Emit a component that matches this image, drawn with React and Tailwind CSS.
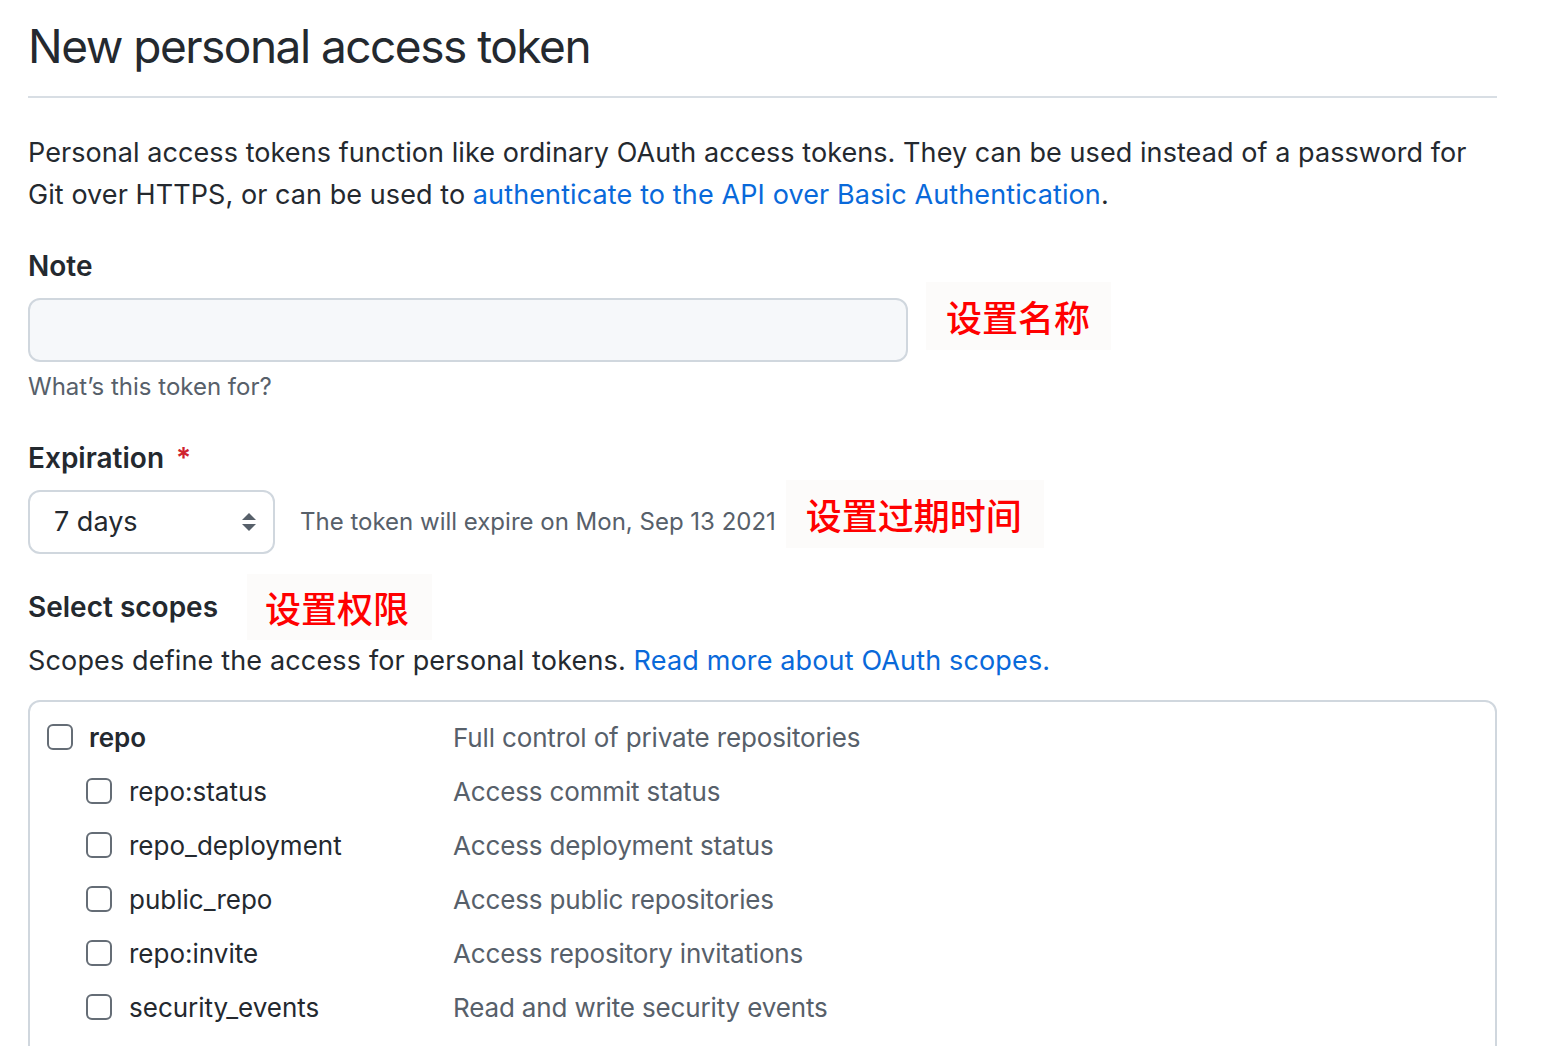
import React from "react";

const font = { fontFamily: "Inter, 'Noto Sans', 'Liberation Sans', sans-serif" };

function Box() {
  return <span className="inline-block w-[26px] h-[26px] rounded-[6px] border-2 border-[#656d76] bg-white shrink-0" />;
}

function Note({ children, className = "" }) {
  return (
    <div
      className={"bg-[#fcfbfa] flex items-center text-[#ff0000] text-[36px] leading-[44px] font-medium " + className}
      style={{ fontFamily: "'Noto Sans CJK SC', sans-serif" }}
    >
      {children}
    </div>
  );
}

const subs = [
  ["repo:status", "Access commit status"],
  ["repo_deployment", "Access deployment status"],
  ["public_repo", "Access public repositories"],
  ["repo:invite", "Access repository invitations"],
  ["security_events", "Read and write security events"],
];

export default function App() {
  return (
    <div className="bg-white min-h-[1046px] w-[1566px] overflow-hidden text-[#24292f]" style={font}>
      <div className="pl-[28px] w-[1497px]">
        <div className="pt-[16px] pb-[20px] border-b-2 border-[#d8dee4]">
          <h1 className="text-[46px] leading-[60px] font-normal tracking-[-1.5px]">New personal access token</h1>
        </div>

        <p className="mt-[34px] text-[27px] leading-[42px] whitespace-nowrap tracking-[0.07px]">
          Personal access tokens function like ordinary OAuth access tokens. They can be used instead of a password for
          <br />
          Git over HTTPS, or can be used to{" "}
          <span className="text-[#0969da] tracking-[0.12px]">authenticate to the API over Basic Authentication</span>.
        </p>

        <div className="mt-[29px] text-[28px] leading-[42px] font-semibold">Note</div>
        <div className="mt-[11px] flex items-start">
          <div className="w-[880px] h-[64px] rounded-[12px] border-2 border-[#d0d7de] bg-[#f6f8fa]" />
          <Note className="ml-[18px] -mt-[16px] h-[68px] w-[185px] pl-[20px]">设置名称</Note>
        </div>
        <div className="mt-[7px] text-[24px] leading-[36px] text-[#57606a]">What’s this token for?</div>

        <div className="mt-[32px] text-[28px] leading-[42px] font-semibold flex items-center">
          Expiration <span className="ml-[12px] text-[#cf222e]">*</span>
        </div>
        <div className="mt-[11px] flex items-start">
          <div className="w-[247px] h-[64px] rounded-[12px] border-2 border-[#d0d7de] bg-white flex items-center pl-[24px] pr-[16px] justify-between">
            <span className="text-[27px]">7 days</span>
            <svg width="16" height="22" viewBox="0 0 16 22">
              <path d="M8 2 L15 9 L1 9 Z" fill="#57606a" />
              <path d="M1 13 L15 13 L8 20 Z" fill="#57606a" />
            </svg>
          </div>
          <div className="ml-[25px] h-[64px] flex items-center text-[24px] text-[#57606a] whitespace-nowrap">
            The token will expire on Mon, Sep 13 2021
          </div>
          <Note className="ml-[10px] -mt-[10px] h-[68px] w-[258px] pl-[20px]">设置过期时间</Note>
        </div>

        <div className="mt-[20px] flex items-center">
          <div className="text-[28px] leading-[42px] font-semibold">Select scopes</div>
          <Note className="ml-[29px] h-[66px] w-[185px] pl-[18px]">设置权限</Note>
        </div>
        <p className="text-[27px] leading-[42px] tracking-[0.15px]">
          Scopes define the access for personal tokens.{" "}
          <span className="text-[#0969da]">Read more about OAuth scopes.</span>
        </p>

        <div className="mt-[18px] border-2 border-[#d0d7de] rounded-[12px] h-[400px] pt-[8px]">
          <div className="flex items-center h-[54px] pl-[17px]">
            <div className="w-[406px] flex items-center">
              <Box />
              <span className="ml-[16px] text-[26px] font-semibold">repo</span>
            </div>
            <span className="text-[26px] text-[#57606a] tracking-[-0.15px]">Full control of private repositories</span>
          </div>
          {subs.map(([k, d]) => (
            <div key={k} className="flex items-center h-[54px] pl-[17px]">
              <div className="w-[406px] flex items-center pl-[39px]">
                <Box />
                <span className="ml-[17px] text-[26px]">{k}</span>
              </div>
              <span className="text-[26px] text-[#57606a] tracking-[-0.15px]">{d}</span>
            </div>
          ))}
        </div>
      </div>
    </div>
  );
}
